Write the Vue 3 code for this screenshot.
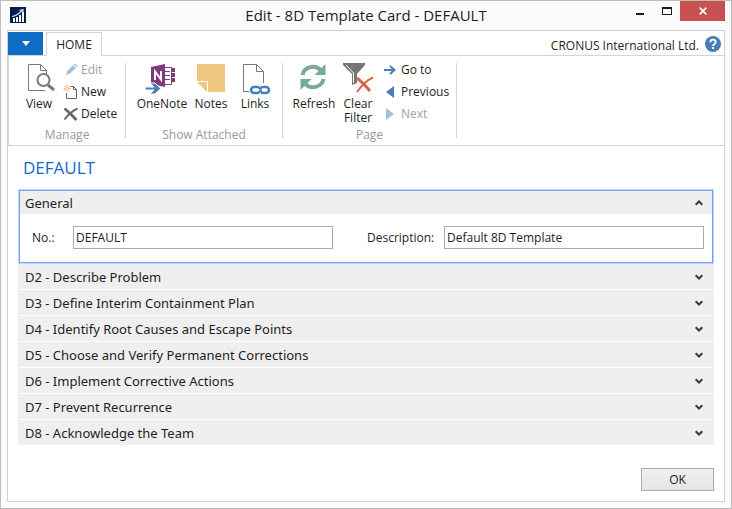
<script setup>
import { ref } from 'vue'

const number = ref('DEFAULT')
const description = ref('Default 8D Template')
const sections = [
  'D2 - Describe Problem',
  'D3 - Define Interim Containment Plan',
  'D4 - Identify Root Causes and Escape Points',
  'D5 - Choose and Verify Permanent Corrections',
  'D6 - Implement Corrective Actions',
  'D7 - Prevent Recurrence',
  'D8 - Acknowledge the Team',
]
</script>

<template>
  <div class="window">
    <header class="titlebar">
      <svg class="app-icon" viewBox="0 0 16 16" aria-hidden="true">
        <rect width="16" height="16" fill="#001e4e" />
        <path d="M3 11h2v4H3zM6 10h2v5H6zM9 8h2v7H9zM12 5h2v10h-2z" fill="#fff" />
        <path d="M2 9.500Q7 9 12.500 3M9.500 3.500L13 2.500V6" fill="none" stroke="#d5dce8" stroke-width="1.200" />
      </svg>
      <h1 class="window-title">Edit - 8D Template Card - DEFAULT</h1>
      <div class="window-controls">
        <button class="control" type="button" aria-label="Minimize">
          <svg width="10" height="10" viewBox="0 0 10 10"><path d="M1 7h8v2H1z" fill="#1a1a1a" /></svg>
        </button>
        <button class="control" type="button" aria-label="Maximize">
          <svg width="10" height="8" viewBox="0 0 10 8"><path d="M0 0h10v8H0zM1 2v5h8V2z" fill="#1a1a1a" fill-rule="evenodd" /></svg>
        </button>
        <button class="control close" type="button" aria-label="Close">
          <svg width="8" height="8" viewBox="0 0 8 8"><path d="M.7.7l6.600 6.600M7.300.7L.7 7.300" stroke="#fff" stroke-width="1.700" /></svg>
        </button>
      </div>
    </header>

    <div class="frame">
      <nav class="tabs">
        <button class="app-menu" type="button" aria-label="Application menu">
          <svg width="8" height="5" viewBox="0 0 8 5"><path d="M0 0h8L4 5z" fill="#fff" /></svg>
        </button>
        <button class="tab" type="button">HOME</button>
        <span class="company">CRONUS International Ltd.</span>
        <button class="help" type="button" aria-label="Help">
          <svg width="16" height="16" viewBox="0 0 16 16">
            <circle cx="8" cy="8" r="8" fill="#4a7ebb" />
            <path d="M5.300 6.300C5.300 2.700 10.800 2.900 10.700 6c0 1.900-2.600 1.900-2.600 4" fill="none" stroke="#fff" stroke-width="1.900" />
            <rect x="7" y="11" width="2" height="2" fill="#fff" />
          </svg>
        </button>
      </nav>

      <div class="ribbon">
        <section class="group manage">
          <div class="actions">
            <button class="large view" type="button">
              <svg width="32" height="32" viewBox="0 0 32 32">
                <path d="M22 27.500H5.500V1.500h12l6 6V12M17.500 1.500v6h6" fill="none" stroke="#7a7a7a" />
                <circle cx="20.500" cy="17" r="6" fill="#fff" stroke="#7a7a7a" stroke-width="2" />
                <path d="M25 22l6 5" stroke="#7a7a7a" stroke-width="3" />
              </svg>
              <span>View</span>
            </button>
            <div class="stack">
              <button class="small disabled" type="button" disabled>
                <svg width="16" height="16" viewBox="0 0 16 16">
                  <path d="M3 13l1.200-4L10 3.300 12.800 6 7 11.800z" fill="#a4bedd" /><path d="M10.800 2.500L12 1.400l2.700 2.700-1.200 1.200z" fill="#a4bedd" />
                </svg>
                <span>Edit</span>
              </button>
              <button class="small" type="button">
                <svg width="16" height="16" viewBox="0 0 16 16">
                  <path d="M7.500 2.500h3l3 3v9h-10V9M10.500 2.500v3h3" fill="none" stroke="#666" />
                  <path d="M4 1v7M.5 4.500h7M1.500 2l5 5M6.500 2l-5 5" stroke="#e9b765" />
                  <circle cx="4" cy="4.500" r="1" fill="#fff" />
                </svg>
                <span>New</span>
              </button>
              <button class="small" type="button">
                <svg width="16" height="16" viewBox="0 0 16 16">
                  <path d="M1.500 2.500C6 6 9 9 13.500 14" stroke="#666" stroke-width="2.800" fill="none" />
                  <path d="M14.500 2.500C9 5 5 9 1.500 13.500" stroke="#666" stroke-width="2" fill="none" />
                </svg>
                <span>Delete</span>
              </button>
            </div>
          </div>
          <h2 class="group-name">Manage</h2>
        </section>

        <section class="group attached">
          <div class="actions">
            <button class="large onenote" type="button">
              <svg width="32" height="32" viewBox="0 0 32 32">
                <path d="M5 4l14-3v23L5 21z" fill="#80397b" />
                <path d="M19 4.500h6.500v17H19" fill="none" stroke="#80397b" />
                <path d="M19 8.500h5M19 12.500h5M19 16.500h5" stroke="#80397b" />
                <path d="M25 5h4v4h-4zM25 10h4v4h-4zM25 15h4v4h-4z" fill="#80397b" />
                <path d="M9 17V8.500l6 8V8" stroke="#fff" stroke-width="2" fill="none" />
                <path d="M-1 24h9l-4-4h5l6 5.500-6 5.500H4l4-4h-9z" fill="#4a7ebb" stroke="#fff" stroke-width="1" />
              </svg>
              <span>OneNote</span>
            </button>
            <button class="large notes" type="button">
              <svg width="32" height="32" viewBox="0 0 32 32">
                <path d="M2 1h28v28H13V18H2z" fill="#efc77e" /><path d="M2 19h10v10z" fill="#efc77e" />
              </svg>
              <span>Notes</span>
            </button>
            <button class="large links" type="button">
              <svg width="32" height="32" viewBox="0 0 32 32">
                <path d="M10 28.500H4.500v-27h13l7 7V20M17.500 1.500v7h7" fill="none" stroke="#777" />
                <path d="M20 24h-5a3 3 0 0 0 0 6h3q2 0 3-2M22 30h5a3 3 0 0 0 0-6h-3q-2 0-3 2" fill="none" stroke="#4a7ebb" stroke-width="2.600" />
                <path d="M18.500 24q2 0 3 3t3 3" fill="none" stroke="#4a7ebb" stroke-width="2" />
              </svg>
              <span>Links</span>
            </button>
          </div>
          <h2 class="group-name">Show Attached</h2>
        </section>

        <section class="group page">
          <div class="actions">
            <button class="large refresh" type="button">
              <svg width="32" height="32" viewBox="0 0 32 32">
                <path d="M4.500 12A10.500 10 0 0 1 23 7.500" fill="none" stroke="#79a998" stroke-width="4" />
                <path d="M27.500 1v11H16.500z" fill="#79a998" />
                <path d="M25.500 16A10.500 10 0 0 1 7 20.500" fill="none" stroke="#79a998" stroke-width="4" />
                <path d="M2.500 27V16h11z" fill="#79a998" />
              </svg>
              <span>Refresh</span>
            </button>
            <button class="large clear" type="button">
              <svg width="32" height="32" viewBox="0 0 32 32">
                <path d="M1 0h22v2l-8 9v9l-5 2V11L1 2z" fill="#757575" />
                <path d="M4 2l7.500 8v10" fill="none" stroke="#fff" />
                <path d="M15 15c5 4 9 8 13 13" stroke="#d96549" stroke-width="3" fill="none" />
                <path d="M31 14.500C25 17 20 22 15 29" stroke="#d96549" stroke-width="2" fill="none" />
              </svg>
              <span>Clear<br />Filter</span>
            </button>
            <div class="stack">
              <button class="small" type="button">
                <svg width="16" height="16" viewBox="0 0 16 16"><path d="M2 8h10M8 4l4.500 4L8 12" fill="none" stroke="#4a7ebb" stroke-width="2" /></svg>
                <span>Go to</span>
              </button>
              <button class="small" type="button">
                <svg width="16" height="16" viewBox="0 0 16 16"><path d="M12 2v12L4 8z" fill="#4a7ebb" /></svg>
                <span>Previous</span>
              </button>
              <button class="small disabled" type="button" disabled>
                <svg width="16" height="16" viewBox="0 0 16 16"><path d="M4 2v12l8-6z" fill="#a4bedd" /></svg>
                <span>Next</span>
              </button>
            </div>
          </div>
          <h2 class="group-name">Page</h2>
        </section>
      </div>

      <main class="content">
        <h2 class="page-title">DEFAULT</h2>
        <section class="general">
          <button class="section-header" type="button" aria-expanded="true">
            <span>General</span>
            <svg width="8" height="6" viewBox="0 0 8 6"><path d="M.7 4.800L4 1.500l3.300 3.300" fill="none" stroke="#3c3c3c" stroke-width="2" /></svg>
          </button>
          <div class="fields">
            <label class="no-label" for="no">No.:</label>
            <input id="no" v-model="number" type="text" />
            <label class="description-label" for="description">Description:</label>
            <input id="description" v-model="description" type="text" />
          </div>
        </section>
        <div class="sections">
          <button v-for="name in sections" :key="name" class="section-header" type="button" aria-expanded="false">
            <span>{{ name }}</span>
            <svg width="8" height="6" viewBox="0 0 8 6"><path d="M.7 1.200L4 4.500l3.300-3.300" fill="none" stroke="#3c3c3c" stroke-width="2" /></svg>
          </button>
        </div>
        <footer class="footer">
          <button class="ok" type="button">OK</button>
        </footer>
      </main>
    </div>
  </div>
</template>

<style>
body {
  margin: 0;
}
</style>

<style scoped>
.window {
  box-sizing: border-box;
  display: flex;
  flex-direction: column;
  min-height: 100vh;
  padding: 0 6px 6px;
  border: 1px solid #bdbdbd;
  background: #fbfbfb;
  color: #1e1e1e;
  font-family: "Segoe UI", "Open Sans", sans-serif;
  font-size: 12px;
  line-height: 16px;
}
button {
  margin: 0;
  padding: 0;
  border: 0;
  background: none;
  color: inherit;
  font: inherit;
}
h1,
h2 {
  margin: 0;
  font-weight: 400;
}
svg {
  display: block;
  flex: none;
  overflow: visible;
}
.titlebar {
  display: grid;
  grid-template-columns: 1fr auto 1fr;
  align-items: start;
  height: 29px;
}
.app-icon {
  width: 16px;
  height: 16px;
  margin: 6px 0 0 3px;
}
.window-title {
  padding-top: 4px;
  font-size: 15px;
  line-height: 20px;
}
.window-controls {
  display: flex;
  justify-content: flex-end;
}
.control {
  display: flex;
  align-items: center;
  justify-content: center;
  width: 27px;
  height: 20px;
}
.close {
  width: 45px;
  background: #c75050;
}
.frame {
  display: flex;
  flex: 1;
  flex-direction: column;
  border: 1px solid #d0d0d0;
  background: #fff;
}
.tabs {
  display: flex;
  align-items: flex-end;
  height: 24px;
}
.app-menu {
  display: flex;
  align-items: center;
  justify-content: center;
  width: 35px;
  height: 23px;
  margin-right: 3px;
  background: #0f6cc5;
}
.tab {
  position: relative;
  box-sizing: border-box;
  width: 56px;
  height: 24px;
  margin-bottom: -1px;
  border: 1px solid #d4d4d4;
  border-bottom: 0;
  background: #fff;
}
.company {
  margin: 0 6px 1px auto;
}
.help {
  margin: 0 3px 3px 0;
}
.ribbon {
  display: flex;
  height: 89px;
  border: solid #d4d4d4;
  border-width: 1px 0 1px 1px;
}
.group {
  display: flex;
  flex-direction: column;
  box-sizing: border-box;
  height: 75px;
  margin-top: 7px;
  border-right: 1px solid #d4d4d4;
}
.manage {
  width: 117px;
}
.attached {
  width: 157px;
}
.page {
  width: 174px;
}
.actions {
  display: flex;
  flex: none;
  height: 63px;
}
.group-name {
  color: #999;
  font-size: 12px;
  line-height: 18px;
  text-align: center;
}
.large {
  display: flex;
  flex-direction: column;
  align-items: center;
  align-self: flex-start;
  gap: 2px;
  line-height: 14px;
}
.view {
  width: 34px;
  margin-left: 13px;
}
.stack {
  display: flex;
  flex-direction: column;
  margin-top: -4px;
}
.view + .stack {
  margin-left: 7px;
}
.clear + .stack {
  margin-left: 3px;
}
.small {
  display: flex;
  align-items: center;
  gap: 2px;
  height: 22px;
  text-align: left;
}
.page .small {
  gap: 3px;
}
.disabled {
  color: #a0a0a0;
}
.onenote {
  width: 54px;
  margin-left: 9px;
}
.notes {
  width: 44px;
}
.links {
  width: 44px;
}
.refresh {
  width: 46px;
  margin-left: 8px;
}
.clear {
  width: 42px;
}
.content {
  display: flex;
  flex: 1;
  flex-direction: column;
  padding: 12px 10px 10px;
}
.page-title {
  padding-left: 5px;
  color: #0f6cc5;
  font-size: 17px;
  line-height: 20px;
}
.general {
  margin: 12px 1px 0;
  border: 1px solid #6ea5f5;
  outline: 1px solid #bcd6fb;
}
.section-header {
  display: flex;
  align-items: center;
  justify-content: space-between;
  width: 100%;
  height: 25px;
  padding: 0 11px 0 7px;
  background: #efefef;
  font-family: "Segoe UI", "Noto Sans", sans-serif;
  font-size: 13px;
  text-align: left;
}
.general .section-header {
  height: 23px;
  padding: 0 9px 0 5px;
}
.fields {
  display: flex;
  align-items: center;
  padding: 12px 8px 13px 12px;
}
.no-label {
  width: 41px;
}
.description-label {
  width: 77px;
  margin-left: 34px;
}
.fields input {
  box-sizing: border-box;
  flex: 1;
  min-width: 0;
  height: 23px;
  padding: 0 2px;
  border: 1px solid #ababab;
  border-radius: 0;
  background: #fff;
  color: inherit;
  font: inherit;
}
.sections {
  display: flex;
  flex-direction: column;
  gap: 1px;
  margin-top: 1px;
}
.footer {
  display: flex;
  justify-content: flex-end;
  margin-top: auto;
}
.ok {
  width: 73px;
  height: 23px;
  border: 1px solid #acacac;
  background: linear-gradient(#f0f0f0, #e5e5e5);
}
</style>
